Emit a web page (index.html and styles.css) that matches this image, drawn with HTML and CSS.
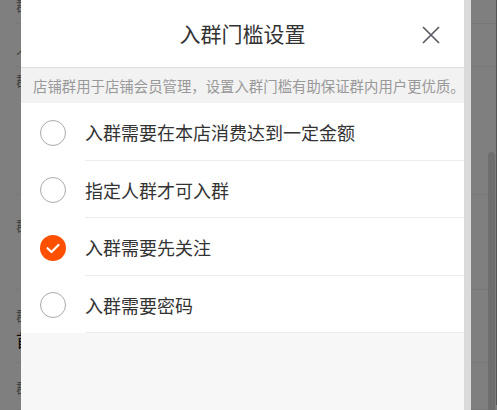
FILE: index.html
```html
<!DOCTYPE html>
<html lang="zh-CN">
<head>
<meta charset="utf-8">
<title>入群门槛设置</title>
<link rel="stylesheet" href="styles.css">
</head>
<body>
<div class="page">
  <div class="bg-row r1"><span class="bg-text">群聊</span></div>
  <div class="bg-row r2"><span class="bg-text">人数</span></div>
  <div class="bg-row r3"><span class="bg-text">群公告</span></div>
  <div class="bg-row r4"><span class="bg-text">群管理</span></div>
  <div class="bg-row r5"><span class="bg-text">群欢迎</span><span class="bg-strong">首次</span></div>
  <div class="bg-row r6"><span class="bg-text">群二维码</span></div>
  <div class="page-thumb"></div>
</div>
<div class="mask"></div>
<div class="dialog">
  <div class="dialog-main">
    <div class="header">
      <span></span>
      <h1 class="title">入群门槛设置</h1>
      <button class="close" aria-label="关闭">
        <svg width="18" height="18" viewBox="0 0 18 18"><path d="M1 1 L17 17 M17 1 L1 17" stroke="#585b63" stroke-width="1.7" fill="none"/></svg>
      </button>
    </div>
    <div class="notice">店铺群用于店铺会员管理，设置入群门槛有助保证群内用户更优质。</div>
    <ul class="options">
      <li class="option">
        <span class="radio"></span>
        <span class="label">入群需要在本店消费达到一定金额</span>
      </li>
      <li class="option">
        <span class="radio"></span>
        <span class="label">指定人群才可入群</span>
      </li>
      <li class="option">
        <span class="radio checked">
          <svg width="26" height="26" viewBox="0 0 26 26"><path d="M7.5 13.2 L11.5 17 L18.5 10" stroke="#fff" stroke-width="2.2" fill="none" stroke-linecap="round" stroke-linejoin="round"/></svg>
        </span>
        <span class="label">入群需要先关注</span>
      </li>
      <li class="option">
        <span class="radio"></span>
        <span class="label">入群需要密码</span>
      </li>
    </ul>
  </div>
  <div class="dialog-track"></div>
</div>
</body>
</html>
```
FILE: styles.css
```css
html, body {
  margin: 0;
  padding: 0;
  height: 100%;
  overflow: hidden;
}
body {
  background: #fff;
  font-family: "Noto Sans CJK SC", "Noto Sans", sans-serif;
  text-spacing-trim: space-all;
}
.page {
  position: relative;
  height: 410px;
  border-right: 1px solid #aaa;
  box-sizing: border-box;
}
.bg-row {
  margin-left: 16px;
  border-bottom: 1px solid #f0f0f0;
  display: flex;
  flex-direction: column;
  font-size: 14px;
  line-height: 20px;
  color: #888;
  box-sizing: border-box;
  white-space: nowrap;
}
.r1 { margin-top: -5px; height: 29px; }
.r2 { height: 43px; padding-top: 14px; }
.r3 { height: 128px; padding-top: 3px; }
.r4 { height: 95px; padding-top: 20px; }
.r5 { height: 73px; padding-top: 15px; }
.r6 { height: 47px; padding-top: 14px; }
.bg-strong {
  color: #111;
  font-size: 17px;
  line-height: 30px;
}
.page-thumb {
  position: absolute;
  right: 1px;
  top: 157px;
  width: 7px;
  height: 300px;
  border-radius: 4px;
  background: #dcdcdc;
}
.mask {
  position: fixed;
  inset: 0;
  background: rgba(0, 0, 0, 0.5);
}
.dialog {
  position: fixed;
  left: 21px;
  top: 0;
  width: 450px;
  height: 410px;
  display: flex;
  background: #f7f7f7;
}
.dialog-main {
  flex: 1;
  min-width: 0;
  display: flex;
  flex-direction: column;
}
.dialog-track {
  width: 7px;
  flex: none;
  background: #dadada;
}
.header {
  height: 67px;
  border-bottom: 1px solid #ddd;
  background: #fff;
  display: grid;
  grid-template-columns: 1fr auto 1fr;
  align-items: center;
}
.title {
  margin: 0;
  font-size: 21px;
  font-weight: normal;
  color: #333;
  line-height: 67px;
}
.close {
  justify-self: end;
  margin-right: 24px;
  margin-top: 3px;
  width: 18px;
  height: 18px;
  padding: 0;
  border: 0;
  background: none;
  display: flex;
}
.notice {
  height: 35px;
  background: #f2f2f2;
  padding-left: 12px;
  font-size: 14.4px;
  line-height: 35px;
  color: #999;
  white-space: nowrap;
  overflow: hidden;
}
.options {
  list-style: none;
  margin: 0;
  padding: 0;
  background: #fff;
}
.option {
  display: flex;
  align-items: center;
  height: 57.5px;
}
.radio {
  width: 26px;
  height: 26px;
  box-sizing: border-box;
  border: 1px solid #aaa;
  border-radius: 50%;
  margin: 2px 19px 0 19px;
  flex: none;
  display: flex;
}
.radio.checked {
  border: 0;
  background: #ff5000;
}
.label {
  flex: 1;
  align-self: stretch;
  display: flex;
  align-items: center;
  padding-top: 2px;
  box-sizing: border-box;
  border-bottom: 1px solid #ececec;
  font-size: 18px;
  color: #333;
}
```
